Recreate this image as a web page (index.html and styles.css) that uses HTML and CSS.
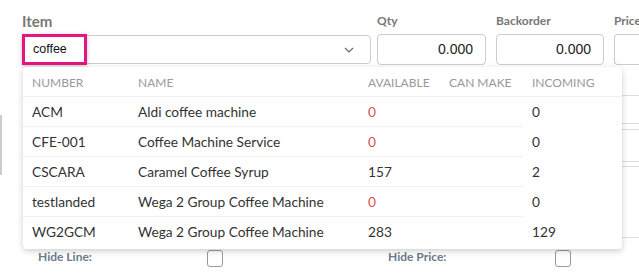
FILE: index.html
```html
<!DOCTYPE html>
<html>
<head>
<meta charset="utf-8">
<link rel="stylesheet" href="styles.css">
</head>
<body>
<div class="form">
  <div class="fields">
    <div class="field f-item">
      <div class="label big">Item</div>
      <div class="select">
        <span class="sel-text">coffee</span>
        <svg class="chev" width="10" height="6" viewBox="0 0 10 6"><path d="M1 1 L5 5 L9 1" fill="none" stroke="#666" stroke-width="1.2"/></svg>
      </div>
      <div class="focus-box">coffee</div>
    </div>
    <div class="field f-qty">
      <div class="label">Qty</div>
      <div class="input">0.000</div>
    </div>
    <div class="field f-back">
      <div class="label">Backorder</div>
      <div class="input">0.000</div>
    </div>
    <div class="field f-price">
      <div class="label">Price</div>
      <div class="input"></div>
    </div>
  </div>

  <div class="under">
    <div class="under-left"></div>
    <div class="under-right">
      <div class="ln l1"></div>
      <div class="ln l2"></div>
      <div class="ln l3"></div>
      <div class="ln l4"></div>
      <div class="ln l5"></div>
      <div class="ln l6"></div>
    </div>
  </div>

  <div class="checks">
    <div class="chk-group g1"><span class="chk-label">Hide Line:</span><span class="box"></span></div>
    <div class="chk-group g2"><span class="chk-label">Hide Price:</span><span class="box"></span></div>
  </div>

  <div class="dropdown">
    <table>
      <thead>
        <tr><th class="c1">Number</th><th class="c2">Name</th><th class="c3">Available</th><th class="c4">Can Make</th><th class="c5">Incoming</th></tr>
      </thead>
      <tbody>
        <tr><td>ACM</td><td>Aldi coffee machine</td><td class="red">0</td><td></td><td>0</td></tr>
        <tr><td>CFE-001</td><td>Coffee Machine Service</td><td class="red">0</td><td></td><td>0</td></tr>
        <tr><td>CSCARA</td><td>Caramel Coffee Syrup</td><td>157</td><td></td><td>2</td></tr>
        <tr><td>testlanded</td><td>Wega 2 Group Coffee Machine</td><td class="red">0</td><td></td><td>0</td></tr>
        <tr class="last"><td>WG2GCM</td><td>Wega 2 Group Coffee Machine</td><td>283</td><td></td><td>129</td></tr>
      </tbody>
    </table>
  </div>
</div>
</body>
</html>
```

FILE: styles.css
```css
* { box-sizing: border-box; }
html, body { margin: 0; padding: 0; background: #fff; }
body {
  width: 639px;
  height: 273px;
  overflow: hidden;
  font-family: Lato, "Open Sans", sans-serif;
  color: #333;
}
.form {
  position: relative;
  width: 639px;
  height: 273px;
  overflow: hidden;
}
.fields {
  display: flex;
  align-items: flex-end;
  padding: 0 0 0 22px;
  height: 65px;
}
.field {
  display: flex;
  flex-direction: column;
  position: relative;
  flex-shrink: 0;
}
.label {
  font-weight: bold;
  font-size: 12px;
  color: #777;
  height: 20px;
  line-height: 14px;
}
.label.big {
  font-size: 15px;
  color: #777;
  height: 22px;
  line-height: 16px;
}
.f-item { width: 349px; margin-right: 6px; }
.f-qty { width: 109px; margin-right: 10px; }
.f-back { width: 108px; margin-right: 10px; }
.f-price { width: 60px; }
.select {
  height: 29px;
  margin-bottom: 1px;
  border: 1px solid #ccc;
  border-radius: 4px;
  display: flex;
  align-items: center;
  justify-content: space-between;
  padding: 0 16px 0 10px;
}
.sel-text { visibility: hidden; font-size: 12px; }
.chev { margin-top: 1px; }
.focus-box {
  position: absolute;
  left: 0;
  bottom: 0;
  width: 65px;
  height: 31px;
  border: 3px solid #e6157f;
  background: #fff;
  font-family: "Liberation Sans", Arial, sans-serif;
  font-size: 12.5px;
  color: #111;
  padding: 0 0 0 8px;
  line-height: 25px;
  box-shadow: 0 1px 4px rgba(0,0,0,0.25);
  z-index: 2;
}
.input {
  height: 31px;
  border: 1px solid #ccc;
  border-radius: 4px;
  text-align: right;
  padding: 0 12px 0 6px;
  font-family: "Liberation Sans", Arial, sans-serif;
  font-size: 14px;
  line-height: 29px;
  color: #222;
}
.f-price .input { width: 60px; border-right: none; border-radius: 4px 0 0 4px; }

.under {
  display: flex;
  justify-content: space-between;
  height: 175px;
}
.under-left {
  width: 2px;
  margin-top: 50px;
  height: 60px;
  background: #ccc;
}
.under-right {
  position: relative;
  width: 20px;
}
.ln { position: absolute; left: 0; right: 0; height: 1px; background: #ddd; }
.l1 { top: 30px; }
.l2 { top: 58px; }
.l3 { top: 64px; }
.l4 { top: 96px; }
.l5 { top: 101px; }
.l6 { top: 172px; }

.checks {
  display: flex;
  height: 33px;
  align-items: center;
}
.chk-group { display: flex; align-items: center; }
.g1 { padding-left: 38px; width: 388px; }
.chk-label {
  font-weight: bold;
  font-size: 12px;
  color: #6b7a8c;
}
.g1 .box { margin-left: 115px; }
.g2 .box { margin-left: 109px; }
.box {
  width: 16px;
  height: 17px;
  border: 1px solid #999;
  border-radius: 3px;
  margin-top: 4px;
  background: #fff;
}

.dropdown {
  position: absolute;
  left: 23px;
  top: 67px;
  width: 599px;
  height: 182px;
  background: #fff;
  border-radius: 4px;
  box-shadow: 0 2px 6px rgba(0,0,0,0.2);
  z-index: 3;
}
table {
  border-collapse: collapse;
  width: 100%;
}
th {
  text-align: left;
  font-weight: normal;
  text-transform: uppercase;
  color: #999;
  font-size: 12px;
  height: 29px;
  padding: 3px 0 0 9px;
  border-bottom: 1px solid #f0f0f0;
}
.c1 { width: 106px; }
.c2 { width: 230px; }
.c3 { width: 81px; }
.c4 { width: 83px; }
td {
  font-size: 13.7px;
  color: #333;
  height: 30px;
  padding: 0 0 0 9px;
  border-bottom: 1px solid #f0f0f0;
}
td:last-child { border-bottom: none; }
tr.last td { border-bottom: none; }
td.red { color: #d9534f; }
```
